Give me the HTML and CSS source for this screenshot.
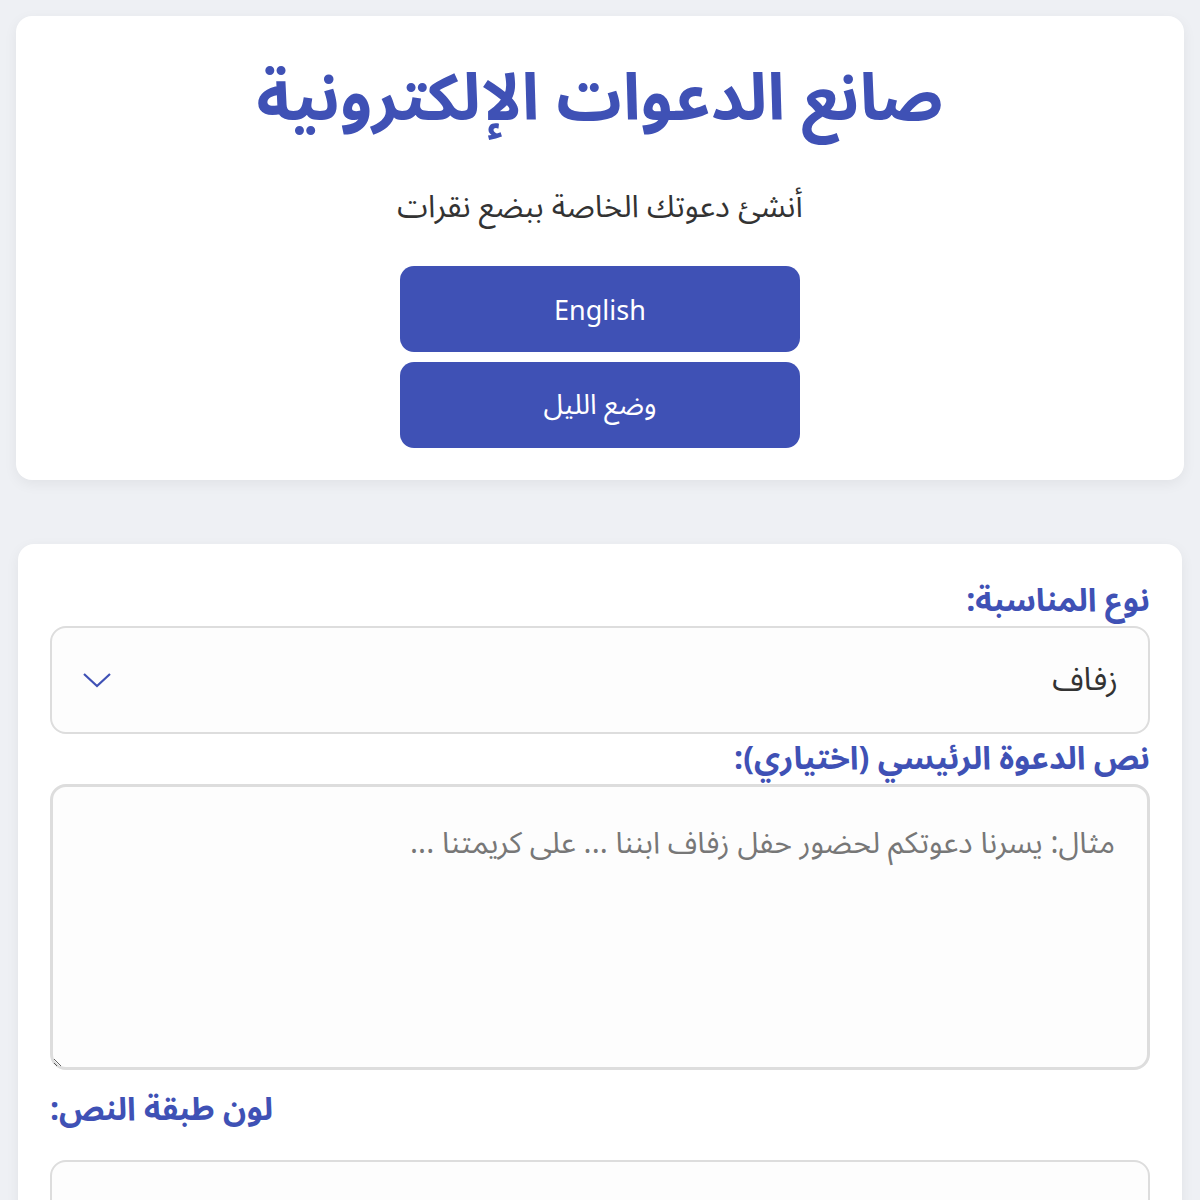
FILE: index.html
```html
<!DOCTYPE html>
<html lang="ar" dir="rtl">
<head>
<meta charset="utf-8">
<title>صانع الدعوات الإلكترونية</title>
<link rel="stylesheet" href="styles.css">
</head>
<body>
<header class="hero">
  <h1 class="title">صانع الدعوات الإلكترونية</h1>
  <p class="subtitle">أنشئ دعوتك الخاصة ببضع نقرات</p>
  <div class="actions">
    <button class="btn" type="button">English</button>
    <button class="btn btn-ar" type="button">وضع الليل</button>
  </div>
</header>
<main class="form-card">
  <div class="field">
    <label class="label">نوع المناسبة:</label>
    <div class="select">
      <span class="select-value">زفاف</span>
      <svg class="chevron" width="30" height="16" viewBox="0 0 30 16" aria-hidden="true"><path d="M2 2 L15 14 L28 2" fill="none" stroke="#3f51b5" stroke-width="2.2"/></svg>
    </div>
  </div>
  <div class="field">
    <label class="label">نص الدعوة الرئيسي (اختياري):</label>
    <textarea class="textarea" placeholder="مثال: يسرنا دعوتكم لحضور حفل زفاف ابننا ... على كريمتنا ..."></textarea>
  </div>
  <div class="field field-color">
    <label class="label label-left">لون طبقة النص:</label>
    <div class="input-box"></div>
  </div>
</main>
</body>
</html>
```
FILE: styles.css
```css
html, body {
  margin: 0;
  padding: 0;
}
body {
  background: #eef0f4;
  padding: 16px;
  font-family: "Noto Sans Arabic", "DejaVu Sans", "Noto Sans", sans-serif;
  color: #333;
}
.hero {
  background: #fff;
  border-radius: 16px;
  box-shadow: 0 4px 14px rgba(0, 0, 0, 0.06);
  height: 464px;
  box-sizing: border-box;
  padding-top: 44px;
  display: flex;
  flex-direction: column;
  align-items: center;
}
.title {
  margin: 0;
  color: #3f51b5;
  font-size: 65px;
  font-weight: 700;
  line-height: 80px;
}
.subtitle {
  margin: 45px 0 0;
  font-size: 31px;
  line-height: 44px;
  color: #333;
}
.actions {
  margin-top: 37px;
  display: flex;
  flex-direction: column;
  gap: 10px;
}
.btn {
  width: 400px;
  height: 86px;
  border: 0;
  border-radius: 14px;
  background: #3f51b5;
  color: #fff;
  font-family: "Noto Sans", "DejaVu Sans", sans-serif;
  font-size: 27px;
}
.btn-ar {
  font-family: "Noto Sans Arabic", "DejaVu Sans", sans-serif;
  font-size: 28px;
}
.form-card {
  margin: 64px 2px 0;
  background: #fff;
  border-radius: 16px;
  padding: 32px 32px 40px;
  box-shadow: 0 4px 14px rgba(0, 0, 0, 0.06);
}
.field {
  display: flex;
  flex-direction: column;
}
.label {
  color: #3f51b5;
  font-weight: 700;
  font-size: 32px;
  line-height: 50px;
}
.label-left {
  text-align: left;
}
.select {
  height: 108px;
  box-sizing: border-box;
  border: 2px solid #ddd;
  border-radius: 16px;
  background: #fdfdfd;
  display: flex;
  align-items: center;
  justify-content: space-between;
  padding: 0 30px 0 30px;
}
.select-value {
  font-size: 32px;
  color: #333;
}
.chevron {
  display: block;
}
.textarea {
  height: 286px;
  box-sizing: border-box;
  border: 3px solid #ddd;
  border-radius: 16px;
  background: #fdfdfd;
  padding: 32px 32px;
  font-family: inherit;
  font-size: 30px;
  line-height: 50px;
  color: #333;
  resize: vertical;
}
.textarea::placeholder {
  color: #777;
}
.field-color {
  margin-top: 15px;
}
.field-color .label {
  margin-bottom: 25px;
}
.input-box {
  height: 100px;
  box-sizing: border-box;
  border: 2px solid #ddd;
  border-radius: 16px;
  background: #fdfdfd;
}
```
